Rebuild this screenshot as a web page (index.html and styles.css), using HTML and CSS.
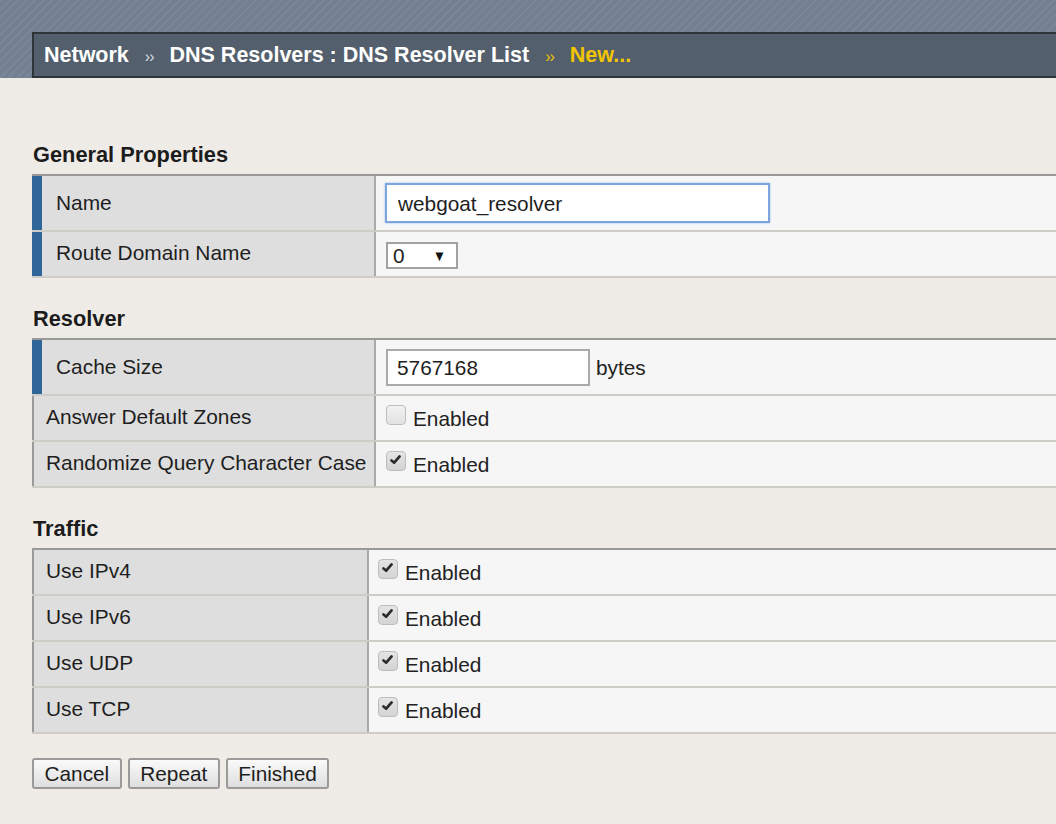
FILE: index.html
```html
<!DOCTYPE html>
<html>
<head>
<meta charset="utf-8">
<title>DNS Resolver List - New</title>
<link rel="stylesheet" href="styles.css">
</head>
<body>
<div class="topbar">
  <div class="crumbs">
    <span class="crumb">Network</span>
    <span class="sep">&rsaquo;&rsaquo;</span>
    <span class="crumb">DNS Resolvers : DNS Resolver List</span>
    <span class="sep sep-cur">&rsaquo;&rsaquo;</span>
    <span class="crumb crumb-cur">New...</span>
  </div>
</div>

<div class="main">
  <h2 class="heading first">General Properties</h2>
  <div class="ptable t-wide">
    <div class="row tall">
      <div class="label req">Name</div>
      <div class="value"><input class="text focus" type="text" value="webgoat_resolver"></div>
    </div>
    <div class="row">
      <div class="label req">Route Domain Name</div>
      <div class="value"><span class="select"><span class="sel-val">0</span><span class="sel-arrow">&#9660;</span></span></div>
    </div>
  </div>

  <h2 class="heading">Resolver</h2>
  <div class="ptable t-wide">
    <div class="row tall">
      <div class="label req">Cache Size</div>
      <div class="value"><input class="text cache" type="text" value="5767168"><span class="unit">bytes</span></div>
    </div>
    <div class="row">
      <div class="label">Answer Default Zones</div>
      <div class="value"><span class="cb"></span><span class="cb-text">Enabled</span></div>
    </div>
    <div class="row">
      <div class="label">Randomize Query Character Case</div>
      <div class="value"><span class="cb checked"><svg viewBox="0 0 20 20" width="20" height="20"><path d="M5 10.5 L8 13 L14 6" fill="none" stroke="#2b2b2b" stroke-width="3" stroke-linecap="round" stroke-linejoin="round"/></svg></span><span class="cb-text">Enabled</span></div>
    </div>
  </div>

  <h2 class="heading">Traffic</h2>
  <div class="ptable t-narrow">
    <div class="row">
      <div class="label">Use IPv4</div>
      <div class="value"><span class="cb checked"><svg viewBox="0 0 20 20" width="20" height="20"><path d="M5 10.5 L8 13 L14 6" fill="none" stroke="#2b2b2b" stroke-width="3" stroke-linecap="round" stroke-linejoin="round"/></svg></span><span class="cb-text">Enabled</span></div>
    </div>
    <div class="row">
      <div class="label">Use IPv6</div>
      <div class="value"><span class="cb checked"><svg viewBox="0 0 20 20" width="20" height="20"><path d="M5 10.5 L8 13 L14 6" fill="none" stroke="#2b2b2b" stroke-width="3" stroke-linecap="round" stroke-linejoin="round"/></svg></span><span class="cb-text">Enabled</span></div>
    </div>
    <div class="row">
      <div class="label">Use UDP</div>
      <div class="value"><span class="cb checked"><svg viewBox="0 0 20 20" width="20" height="20"><path d="M5 10.5 L8 13 L14 6" fill="none" stroke="#2b2b2b" stroke-width="3" stroke-linecap="round" stroke-linejoin="round"/></svg></span><span class="cb-text">Enabled</span></div>
    </div>
    <div class="row">
      <div class="label">Use TCP</div>
      <div class="value"><span class="cb checked"><svg viewBox="0 0 20 20" width="20" height="20"><path d="M5 10.5 L8 13 L14 6" fill="none" stroke="#2b2b2b" stroke-width="3" stroke-linecap="round" stroke-linejoin="round"/></svg></span><span class="cb-text">Enabled</span></div>
    </div>
  </div>

  <div class="buttons">
    <button class="btn">Cancel</button>
    <button class="btn">Repeat</button>
    <button class="btn">Finished</button>
  </div>
</div>
</body>
</html>
```

FILE: styles.css
```css
html, body {
  margin: 0;
  padding: 0;
}
body {
  background: #efece8;
  font-family: "Liberation Sans", Arial, sans-serif;
  color: #222;
  overflow: hidden;
  width: 1056px;
  height: 824px;
}

.topbar {
  height: 78px;
  box-sizing: border-box;
  padding: 32px 0 0 32px;
  background-color: #728090;
  background-image: repeating-linear-gradient(135deg, rgba(255,255,255,0.06) 0 2px, rgba(0,0,0,0) 2px 6px);
}
.crumbs {
  height: 46px;
  box-sizing: border-box;
  border: 2px solid #2f3439;
  border-right: none;
  background: #535f6c;
  display: flex;
  align-items: center;
  padding-left: 10px;
  white-space: nowrap;
}
.crumb {
  font-weight: bold;
  font-size: 21.5px;
  color: #fff;
}
.crumb-cur {
  color: #f2c500;
}
.sep {
  font-size: 16px;
  color: #d5dae0;
  margin: 3px 16px 0 16px;
  letter-spacing: -1px;
}
.sep-cur {
  color: #f2c500;
}

.main {
  padding-left: 32px;
}
.heading {
  font-size: 21.8px;
  font-weight: bold;
  line-height: 24px;
  margin: 29px 0 7px 0;
  padding-left: 1px;
  color: #1c1c1c;
}
.heading.first {
  margin-top: 65px;
}

.ptable {
  width: 1040px;
  border-top: 2px solid #999;
}
.row {
  display: grid;
  height: 44px;
  border-bottom: 2px solid #cfccc8;
}
.t-wide .row {
  grid-template-columns: 344px 1fr;
}
.t-narrow .row {
  grid-template-columns: 337px 1fr;
}
.row.tall {
  height: 54px;
}
.label {
  background: #dedede;
  border-left: 2px solid #9a9a9a;
  border-right: 2px solid #a9a9a9;
  display: flex;
  align-items: center;
  padding: 0 0 3px 12px;
  font-size: 20.9px;
  color: #1e1e1e;
  white-space: nowrap;
  overflow: hidden;
}
.row.tall .label {
  padding-bottom: 1px;
}
.label.req {
  border-left: 10px solid #2f6699;
  padding-left: 14px;
}
.value {
  background: #f6f6f6;
  display: flex;
  align-items: center;
  padding-left: 10px;
  font-size: 20.8px;
}
.t-narrow .value {
  padding-left: 9px;
}

.text {
  box-sizing: border-box;
  font-family: "Liberation Sans", Arial, sans-serif;
  font-size: 20.8px;
  color: #1e1e1e;
  background: #fff;
  border: 2px solid #aaa;
  margin: 0;
  padding: 0 0 0 10px;
  outline: none;
}
.text.focus {
  width: 385px;
  height: 40px;
  margin-left: -1px;
  border-color: #7ba5dc;
  box-shadow: 0 0 2px #9cbde8;
  padding-left: 11px;
  padding-top: 2px;
}
.text.cache {
  width: 204px;
  height: 37px;
  padding-left: 9px;
  margin-top: 1px;
}
.unit {
  margin-left: 6px;
  padding-top: 2px;
}

.select {
  box-sizing: border-box;
  width: 72px;
  height: 27px;
  border: 2px solid #a2a2a2;
  background: #fff;
  display: flex;
  align-items: center;
  justify-content: space-between;
  padding: 1px 9px 0 5px;
  margin-top: 2px;
}
.sel-val {
  font-size: 20.8px;
}
.sel-arrow {
  font-size: 15px;
  color: #111;
  transform: scaleX(0.9);
}

.cb {
  box-sizing: border-box;
  width: 20px;
  height: 20px;
  border: 1px solid #bdbdbd;
  border-radius: 4px;
  background: linear-gradient(#f2f2f2, #e2e2e2);
  margin-bottom: 7px;
  flex: none;
  display: flex;
  align-items: center;
  justify-content: center;
}
.cb svg {
  display: block;
  margin-top: -2px;
}
.cb.checked {
  background: linear-gradient(#e4e4e4, #d4d4d4);
}
.cb-text {
  margin-left: 7px;
  padding-top: 2px;
}

.buttons {
  display: flex;
  gap: 6px;
  margin-top: 24px;
}
.btn {
  box-sizing: border-box;
  height: 31px;
  font-family: "Liberation Sans", Arial, sans-serif;
  font-size: 20.8px;
  color: #1e1e1e;
  border: 2px solid #9a9a9a;
  border-radius: 3px;
  background: linear-gradient(#fafafa, #dedede);
  padding: 0 10.5px;
  margin: 0;
  line-height: 26px;
}
```
